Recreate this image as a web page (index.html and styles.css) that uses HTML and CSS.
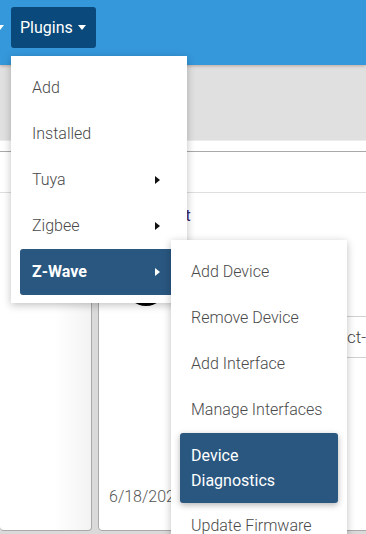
FILE: index.html
```html
<!DOCTYPE html>
<html>
<head>
<meta charset="utf-8">
<link rel="stylesheet" href="styles.css">
</head>
<body>
<div class="page">
  <nav class="navbar">
    <span class="caret-stub"><span class="caret-down"></span></span>
    <button class="nav-btn">Plugins <span class="caret-down"></span></button>
  </nav>
  <div class="toolbar"></div>
  <div class="content">
    <div class="cards">
      <div class="card card-left">
        <div class="card-head"></div>
      </div>
      <div class="card card-right">
        <div class="card-head"></div>
        <div class="card-title"><a class="link">Desk Robot</a></div>
        <div class="avatar"></div>
        <div class="info-row"><span class="info-text">ct-Switch</span></div>
        <div class="spacer"></div>
        <div class="date">6/18/2021</div>
      </div>
    </div>
  </div>

  <ul class="menu menu-main">
    <li class="item">Add</li>
    <li class="item">Installed</li>
    <li class="item sub">Tuya<span class="caret-right"></span></li>
    <li class="item sub">Zigbee<span class="caret-right"></span></li>
    <li class="item sub active bold">Z-Wave<span class="caret-right"></span></li>
  </ul>

  <ul class="menu menu-sub">
    <li class="item">Add Device</li>
    <li class="item">Remove Device</li>
    <li class="item">Add Interface</li>
    <li class="item">Manage Interfaces</li>
    <li class="item active multi">Device<br>Diagnostics</li>
    <li class="item">Update Firmware</li>
  </ul>
</div>
</body>
</html>
```
FILE: styles.css
```css
* { box-sizing: border-box; }
html, body {
  margin: 0;
  padding: 0;
  width: 366px;
  height: 534px;
  overflow: hidden;
  font-family: Roboto, "Liberation Sans", sans-serif;
  font-size: 16px;
  background: #dadada;
}
.page {
  position: relative;
  width: 366px;
  height: 534px;
  overflow: hidden;
}
.navbar {
  height: 65px;
  background: #3598db;
  display: flex;
  align-items: flex-start;
  padding-top: 7px;
  position: relative;
  z-index: 2;
  box-shadow: 0 1px 3px rgba(120, 60, 40, 0.35);
}
.caret-stub {
  width: 4px;
  overflow: hidden;
  display: flex;
  margin-top: 18px;
  margin-right: 7px;
}
.caret-stub .caret-down {
  margin-left: -4px;
}
.caret-down {
  display: inline-block;
  width: 0;
  height: 0;
  border-top: 5px solid #fff;
  border-left: 4px solid transparent;
  border-right: 4px solid transparent;
  vertical-align: 3px;
  margin-left: 1px;
}
.nav-btn {
  height: 41px;
  padding: 0 10px 0 9px;
  background: #09497b;
  color: #fff;
  border: none;
  border-radius: 3px;
  font-family: inherit;
  font-size: 16px;
  display: flex;
  align-items: center;
  gap: 4px;
}
.toolbar {
  height: 76px;
  background: #e0e0e0;
  border-bottom: 1px solid #ececec;
}
.content {
  background: #fff;
  padding-top: 10px;
}
.cards {
  display: flex;
  gap: 6px;
  height: 382px;
  background: #dadada;
}
.card {
  background: #fff;
  border: 1px solid #a9a9a9;
  border-radius: 0 0 4px 4px;
  height: 380px;
}
.card-left {
  flex: 0 0 92px;
  border-left: none;
  background: linear-gradient(to right, #fff 60%, #f3f3f3);
}
.card-right {
  flex: 0 0 320px;
  display: flex;
  flex-direction: column;
  padding-left: 10px;
}
.card-head {
  height: 41px;
  border-bottom: 1px solid #dedede;
}
.card-right .card-head {
  margin-left: -10px;
}
.card-title {
  margin-top: 11px;
  margin-left: -5px;
  line-height: 22px;
  font-size: 17px;
  white-space: nowrap;
}
.link {
  color: #3d2b6b;
}
.avatar {
  width: 40px;
  height: 40px;
  border-radius: 50%;
  background: #000;
  margin-top: 40px;
  margin-left: 17px;
}
.info-row {
  margin-top: 10px;
  height: 42px;
  border-top: 1px solid #d0d0d0;
  border-bottom: 1px solid #d0d0d0;
  margin-left: 70px;
  display: flex;
  align-items: center;
  padding-left: 168px;
  color: #444;
  font-size: 17px;
  font-weight: 300;
  white-space: nowrap;
}
.spacer {
  height: 128px;
}
.date {
  color: #555;
  font-weight: 300;
  font-size: 16px;
  line-height: 22px;
  white-space: nowrap;
}
.menu {
  position: absolute;
  list-style: none;
  margin: 0;
  background: #fff;
  width: 176px;
  padding: 9px 9px 8px;
  box-shadow: 0 2px 8px rgba(0, 0, 0, 0.25);
  z-index: 5;
}
.menu-main {
  left: 11px;
  top: 56px;
}
.menu-sub {
  left: 171px;
  top: 240px;
  z-index: 6;
}
.item {
  height: 46px;
  line-height: 46px;
  padding: 0 18px 0 12px;
  color: #4a4a4a;
  font-weight: 300;
  display: flex;
  justify-content: space-between;
  align-items: center;
  white-space: nowrap;
  border-radius: 3px;
}
.menu-sub .item {
  padding-left: 11px;
}
.item.active {
  background: #295780;
  color: #fff;
}
.item.bold {
  font-weight: 700;
}
.item.multi {
  height: 70px;
  line-height: 25px;
  display: block;
  padding-top: 10px;
  font-weight: 400;
  box-shadow: 0 2px 6px rgba(0, 0, 0, 0.3);
}
.caret-right {
  width: 0;
  height: 0;
  border-left: 5px solid #111;
  border-top: 4.5px solid transparent;
  border-bottom: 4.5px solid transparent;
}
.item.active .caret-right {
  border-left-color: #fff;
}
```
